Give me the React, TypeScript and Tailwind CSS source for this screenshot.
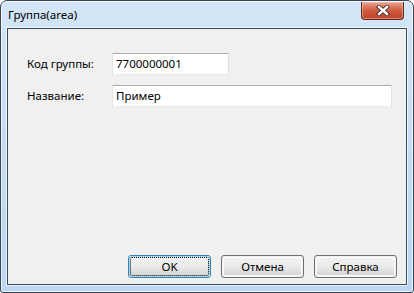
import React from "react"

const font = { fontFamily: '"Noto Sans", "Open Sans", sans-serif' }

function CloseButton() {
  return (
    <div className="absolute right-[9px] top-[1px] w-[43px] h-[18px] rounded-b-[4px] border border-t-0 border-[#5e2a24] bg-gradient-to-b from-[#e8a493] via-[#cf5a3f] to-[#c0442a] shadow-[inset_0_0_0_1px_rgba(255,210,190,0.45)] flex items-center justify-center">
      <svg width="14" height="11" viewBox="0 0 14 11">
        <path d="M3 2 L11 9 M11 2 L3 9" stroke="#3d2a2a" strokeWidth="4.2" strokeLinecap="square" />
        <path d="M3 2 L11 9 M11 2 L3 9" stroke="#ffffff" strokeWidth="2.4" strokeLinecap="square" />
      </svg>
    </div>
  )
}

function Field({ label, value, width }: { label: string; value: string; width: string }) {
  return (
    <div className="flex items-center h-[22px]">
      <span className="w-[85px] text-[11.5px] text-black">{label}</span>
      <div
        className={`${width} h-[22px] bg-white border border-[#e2e3ea] border-t-[#abadb3] border-b-[#e3e9ef] flex items-center pl-[3px] text-[11.5px] text-black`}
      >
        {value}
      </div>
    </div>
  )
}

function Btn({ label, primary }: { label: string; primary?: boolean }) {
  return (
    <div
      className={`w-[83px] h-[23px] rounded-[3px] border p-[1px] ${
        primary ? "border-[#3c7fb1]" : "border-[#707070]"
      }`}
    >
      <div
        className={`w-full h-full rounded-[2px] bg-gradient-to-b from-[#f2f2f2] via-[#ebebeb] to-[#d2d2d2] flex items-center justify-center text-[11.5px] text-black ${
          primary ? "shadow-[0_0_0_1px_#9fd6f3] outline outline-1 outline-dotted outline-black -outline-offset-1" : "shadow-[inset_0_0_0_1px_#fcfcfc]"
        }`}
      >
        {label}
      </div>
    </div>
  )
}

export default function App() {
  return (
    <div className="w-[414px] h-[293px] bg-white" style={font}>
      <div className="relative w-full h-full rounded-t-[7px] rounded-b-[3px] border border-[#3a4450] bg-gradient-to-b from-[#d4e6f7] via-[#c4dcf4] to-[#bcd7f3] shadow-[inset_0_0_0_1px_rgba(255,255,255,0.7)] flex flex-col px-[6px] pb-[7px]">
        <div className="h-[27px] flex items-center pl-[1px] text-[11.5px] text-black">Группа(area)</div>
        <CloseButton />
        <div className="flex-1 bg-[#f0f0f0] border border-[#3b4a5b] shadow-[0_0_0_1px_rgba(255,255,255,0.7)] flex flex-col pt-[24px] pl-[19px]">
          <div className="flex flex-col gap-[10px]">
            <Field label="Код группы:" value="7700000001" width="w-[117px]" />
            <Field label="Название:" value="Пример" width="w-[280px]" />
          </div>
          <div className="mt-auto flex justify-end gap-[10px] pr-[9px] pb-[6px]">
            <Btn label="OK" primary />
            <Btn label="Отмена" />
            <Btn label="Справка" />
          </div>
        </div>
      </div>
    </div>
  )
}
